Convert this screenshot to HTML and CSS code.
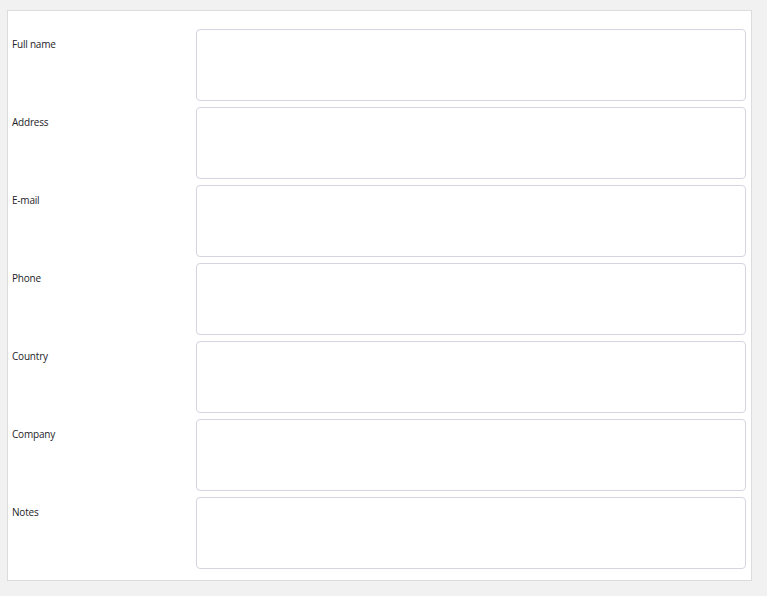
FILE: index.html
```html
<!DOCTYPE html>
<html>
<head>
<meta charset="utf-8">
<link rel="stylesheet" href="styles.css">
</head>
<body>
<form class="card">
  <div class="row"><label class="label">Full name</label><textarea class="field"></textarea></div>
  <div class="row"><label class="label">Address</label><textarea class="field"></textarea></div>
  <div class="row"><label class="label">E-mail</label><textarea class="field"></textarea></div>
  <div class="row"><label class="label">Phone</label><textarea class="field"></textarea></div>
  <div class="row"><label class="label">Country</label><textarea class="field"></textarea></div>
  <div class="row"><label class="label">Company</label><textarea class="field"></textarea></div>
  <div class="row"><label class="label">Notes</label><textarea class="field"></textarea></div>
</form>
</body>
</html>
```
FILE: styles.css
```css
html, body {
  margin: 0;
  background: #f1f1f1;
}
body {
  padding: 10px 0 0 7px;
  font-family: "Open Sans", "Noto Sans", sans-serif;
}
.card {
  width: 745px;
  box-sizing: border-box;
  background: #fff;
  border: 1px solid #dcdcde;
  padding: 18px 5px 11px 4px;
  display: flex;
  flex-direction: column;
  gap: 6px;
}
.row {
  display: grid;
  grid-template-columns: 184px 1fr;
}
.label {
  font-size: 10px;
  line-height: 15px;
  letter-spacing: -0.2px;
  color: #1d2327;
  padding-top: 8px;
}
.field {
  display: block;
  width: 100%;
  height: 72px;
  box-sizing: border-box;
  margin: 0;
  border: 1px solid #d6d4e0;
  border-radius: 4px;
  background: #fff;
  resize: none;
  outline: none;
}
```
